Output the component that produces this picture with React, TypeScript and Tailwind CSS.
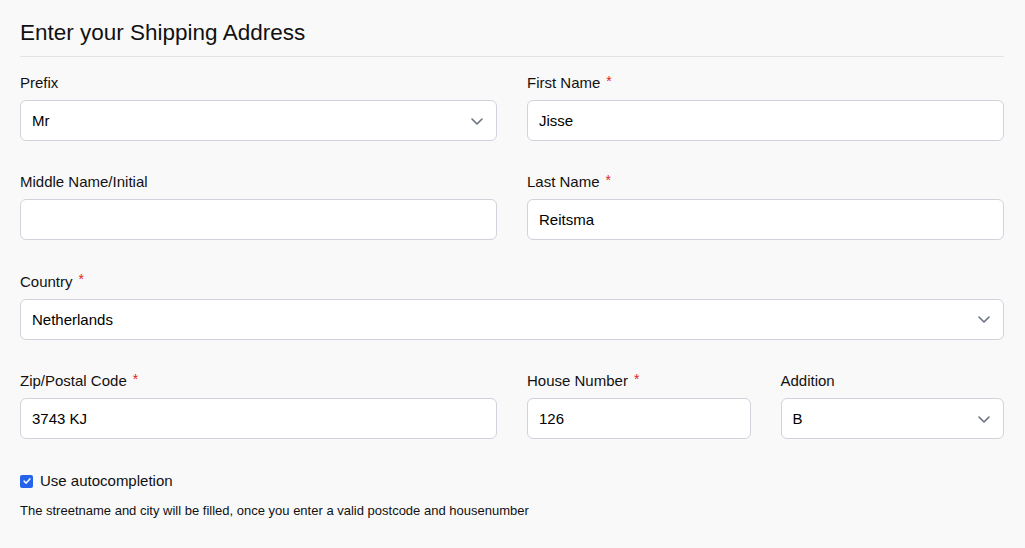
function Label({ text, required }: { text: string; required?: boolean }) {
    return (
        <label className="flex h-5 items-center text-[15px] leading-5 text-[#111]">
            {text}
            {required && <span className="ml-[6px] -mt-[5px] text-[14px] leading-none text-[#e02424]">*</span>}
        </label>
    );
}

function TextField({ label, value, required }: { label: string; value: string; required?: boolean }) {
    return (
        <div className="flex flex-col">
            <Label text={label} required={required} />
            <div className="mt-[7px] flex h-[41px] items-center rounded-[6px] border border-[#d1d3db] bg-white px-[11px] pt-px text-[15px] text-black">
                {value}
            </div>
        </div>
    );
}

function SelectField({ label, value, required }: { label: string; value: string; required?: boolean }) {
    return (
        <div className="flex flex-col">
            <Label text={label} required={required} />
            <div className="mt-[7px] flex h-[41px] items-center justify-between rounded-[6px] border border-[#d1d3db] bg-white pl-[11px] pr-[13px] pt-px text-[15px] text-black">
                <span>{value}</span>
                <svg viewBox="0 0 12 7" className="h-[7px] w-[12px]" fill="none">
                    <path d="M1 1 6 6 11 1" stroke="#6b7280" strokeWidth="1.6" strokeLinecap="round" strokeLinejoin="round" />
                </svg>
            </div>
        </div>
    );
}

export default function App() {
    return (
        <div className="min-h-[548px] bg-[#f9f9fa] px-5 pt-[19px] font-['Liberation_Sans',Arial,sans-serif]">
            <div className="w-[984px]">
                <h1 className="pb-[9px] text-[22.5px] leading-7 text-[#111]">Enter your Shipping Address</h1>
                <div className="border-t border-[#e3e4e8]" />

                <div className="mt-4 grid grid-cols-2 gap-x-[30px] gap-y-[31.4px]">
                    <SelectField label="Prefix" value="Mr" />
                    <TextField label="First Name" value="Jisse" required />
                    <TextField label="Middle Name/Initial" value="" />
                    <TextField label="Last Name" value="Reitsma" required />
                    <div className="col-span-2">
                        <SelectField label="Country" value="Netherlands" required />
                    </div>
                    <TextField label="Zip/Postal Code" value="3743 KJ" required />
                    <div className="grid grid-cols-2 gap-x-[30px]">
                        <TextField label="House Number" value="126" required />
                        <SelectField label="Addition" value="B" />
                    </div>
                </div>

                <div className="mt-[31px] flex items-center gap-[7px] text-[15px] text-[#111]">
                    <span className="flex h-[13px] w-[13px] items-center justify-center rounded-[2px] bg-[#2563eb]">
                        <svg viewBox="0 0 12 12" className="h-[10px] w-[10px]" fill="none">
                            <path d="M2.5 6.2 5 8.5 9.5 3.5" stroke="white" strokeWidth="1.8" strokeLinecap="round" strokeLinejoin="round" />
                        </svg>
                    </span>
                    Use autocompletion
                </div>
                <p className="mt-[8px] text-[13px] text-[#111]">
                    The streetname and city will be filled, once you enter a valid postcode and housenumber
                </p>
            </div>
        </div>
    );
}
